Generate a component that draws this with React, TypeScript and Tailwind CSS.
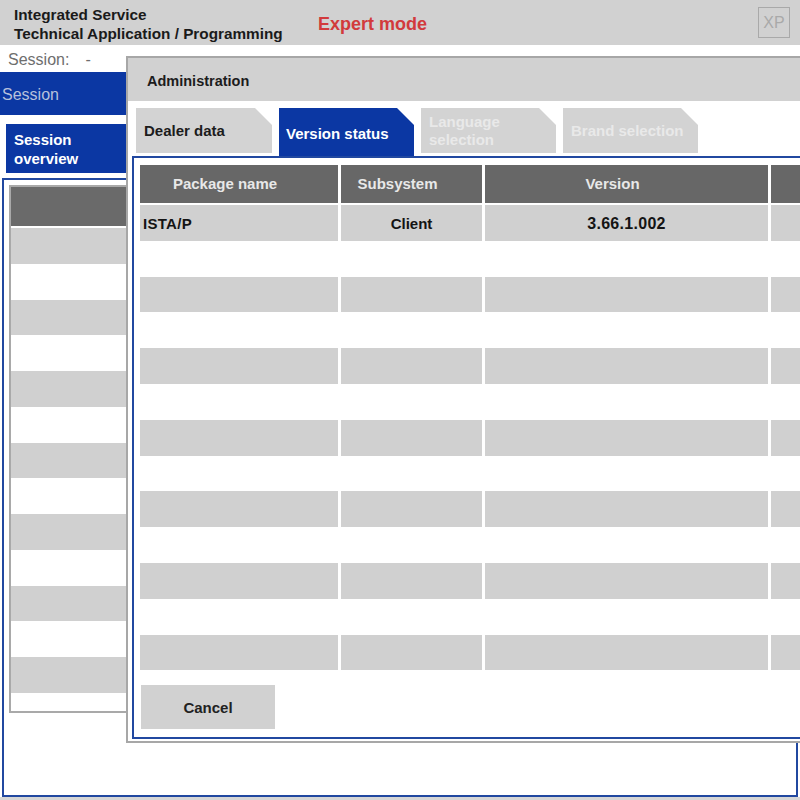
const rows = Array.from({ length: 13 }, (_, i) => i)
const leftRows = Array.from({ length: 14 }, (_, i) => i)

const tabCut = '[clip-path:polygon(0_0,calc(100%_-_17px)_0,100%_17px,100%_100%,0_100%)]'

function Tab({ label, state, width }: { label: React.ReactNode; state: 'idle' | 'active' | 'disabled'; width: string }) {
  if (state === 'active') {
    return (
      <div className={`${width} h-[48px] bg-[#0b37a3] text-white font-bold text-[15px] leading-[18px] flex items-center pl-[7px] pt-[3px] ${tabCut}`}>
        {label}
      </div>
    )
  }
  return (
    <div
      className={`${width} h-[45px] bg-[#d3d3d3] font-bold text-[15px] leading-[18px] flex items-center pl-[8px] ${tabCut} ${
        state === 'disabled' ? 'text-[#e9e9e9]' : 'text-[#1c1c1c]'
      }`}
    >
      {label}
    </div>
  )
}

function AdminDialog() {
  return (
    <div className="absolute left-[126px] top-[56px] w-[700px] h-[687px] border-2 border-[#a7a7a7] bg-white flex flex-col">
      {/* Title */}
      <div className="h-[43px] bg-[#d1d1d1] flex items-center pl-[19px] pt-[5px] font-bold text-[14.5px] text-[#1c1c1c]">
        Administration
      </div>

      {/* Tabs */}
      <div className="mt-[7px] ml-[8px] flex items-start gap-[7px] h-[48px]">
        <Tab label="Dealer data" state="idle" width="w-[136px]" />
        <Tab label="Version status" state="active" width="w-[135px]" />
        <Tab label={<span>Language<br />selection</span>} state="disabled" width="w-[135px]" />
        <Tab label="Brand selection" state="disabled" width="w-[135px]" />
      </div>

      {/* Version table */}
      <div className="ml-[4px] mb-[2px] flex-1 border-2 border-[#2148a0] px-[6px] pt-[7px]">
        <div className="grid grid-cols-[198px_141px_283px_1fr] gap-x-[3px] text-[15px] font-bold">
          <div className="h-[38px] bg-[#676767] text-[#e8e8e8] flex items-center justify-center pr-[28px]">Package name</div>
          <div className="h-[38px] bg-[#676767] text-[#e8e8e8] flex items-center justify-center pr-[28px]">Subsystem</div>
          <div className="h-[38px] bg-[#676767] text-[#e8e8e8] flex items-center justify-center pr-[28px]">Version</div>
          <div className="h-[38px] bg-[#676767]" />
        </div>
        <div className="mt-[2px] flex flex-col">
          {rows.map(i => {
            const shade = i % 2 === 0 ? 'bg-[#d0d0d0]' : 'bg-white'
            return (
              <div key={i} className="grid grid-cols-[198px_141px_283px_1fr] gap-x-[3px] h-[35.8px] text-[15px] font-bold text-[#141414]">
                <div className={`${shade} flex items-center pl-[3px] pt-[2px] tracking-[0.3px]`}>{i === 0 ? 'ISTA/P' : ''}</div>
                <div className={`${shade} flex items-center justify-center pt-[2px]`}>{i === 0 ? 'Client' : ''}</div>
                <div className={`${shade} flex items-center justify-center pt-[2px] text-[16px] tracking-[0.3px]`}>{i === 0 ? '3.66.1.002' : ''}</div>
                <div className={shade} />
              </div>
            )
          })}
        </div>
        <button className="mt-[15px] ml-[1px] w-[134px] h-[44px] bg-[#d1d1d1] font-bold text-[15px] text-[#222] pt-[2px]">
          Cancel
        </button>
      </div>
    </div>
  )
}

export default function App() {
  return (
    <div className="relative h-screen w-screen overflow-hidden bg-white flex flex-col font-['Liberation_Sans',Arial,sans-serif]">
      {/* Header */}
      <header className="h-[45px] shrink-0 bg-[#d1d1d1] flex items-start">
        <div className="w-[318px] shrink-0 pl-[14px] pt-[5px] text-[15.3px] leading-[19px] font-bold text-[#1a1a1a]">
          <div>Integrated Service</div>
          <div>Technical Application / Programming</div>
        </div>
        <div className="mt-[13px] text-[18px] leading-[22px] font-bold text-[#d23a3c]">Expert mode</div>
        <div className="ml-auto mr-[10px] mt-[7px] w-[32px] h-[31px] border border-[#a9a9a9] flex items-center justify-center text-[16px] text-[#a9a9a9]">
          XP
        </div>
      </header>

      <div className="h-[27px] shrink-0 flex items-center pl-[8px] pt-[3px] text-[16px] text-[#6e6e6e]">
        Session:<span className="ml-[16px]">-</span>
      </div>

      <div className="h-[43px] shrink-0 bg-[#0b37a3] flex items-center pl-[2px] pt-[3px] text-[16px] text-[#b7c1dc]">Session</div>

      <div className="mt-[9px] ml-[6px] w-[170px] h-[49px] shrink-0 bg-[#0b37a3] px-[8px] pt-[6px] text-[15px] leading-[19px] font-bold text-white">
        Session
        <br />
        overview
      </div>

      {/* Session overview frame */}
      <div className="mt-[5px] mx-[2px] h-[619px] shrink-0 border-2 border-[#2148a0] p-[5px]">
        <div className="h-[528px] border-2 border-[#a9a9a9] overflow-hidden">
          <div className="h-[39px] bg-[#6a6a6a]" />
          <div className="mt-[2px]">
            {leftRows.map(i => (
              <div key={i} className={`h-[35.75px] ${i % 2 === 0 ? 'bg-[#d0d0d0]' : 'bg-white'}`} />
            ))}
          </div>
        </div>
      </div>
      <div className="flex-1 bg-[#d6d6d6]" />

      <AdminDialog />
    </div>
  )
}
